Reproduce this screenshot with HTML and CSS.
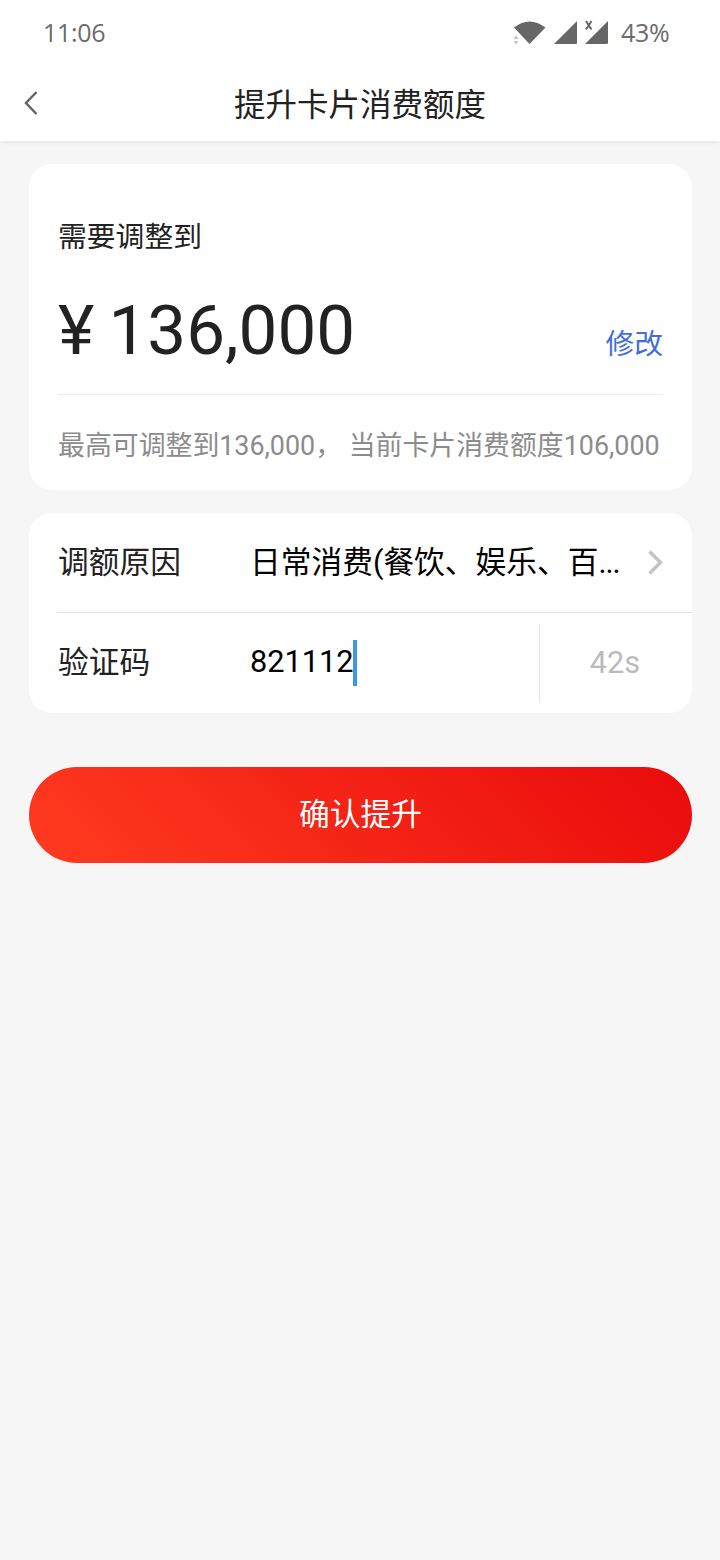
FILE: index.html
```html
<!DOCTYPE html>
<html lang="zh-CN">
<head>
<meta charset="utf-8">
<title>提升卡片消费额度</title>
<link rel="stylesheet" href="styles.css">
</head>
<body>
<header class="header">
  <div class="status">
    <span class="clock">11:06</span>
    <svg class="status-icons" width="100" height="30" viewBox="0 0 100 30">
      <path class="ink" d="M4 9.500Q19.500-2.500 35.500 9.500L19.500 26Z"/>
      <path class="faint" d="M3.500 21L6 17.500L8.500 21ZM3.500 23L6 26.500L8.500 23Z"/>
      <path class="ink" d="M44 26L67 3V25Q67 26 66 26ZM75 26L98 3V25Q98 26 97 26Z"/>
      <path class="cross" d="M76 3L81.500 11.500M81.500 3L76 11.500"/>
    </svg>
    <span class="battery">43%</span>
  </div>
  <div class="nav">
    <svg class="back" width="16" height="26" viewBox="0 0 16 26"><path d="M13.500 1L3 12L13.500 23"/></svg>
    <h1 class="title">提升卡片消费额度</h1>
  </div>
</header>
<main class="content">
  <section class="card limit">
    <div class="limit-label">需要调整到</div>
    <div class="limit-row">
      <span class="amount">¥ 136,000</span>
      <a class="edit">修改</a>
    </div>
    <p class="hint">最高可调整到136,000， 当前卡片消费额度106,000</p>
  </section>
  <section class="card form">
    <div class="row reason">
      <span class="name">调额原因</span>
      <span class="value">日常消费(餐饮、娱乐、百<span class="dots">...</span></span>
      <svg class="chevron" width="18" height="26" viewBox="0 0 18 26"><path d="M2.500 1.500L13.500 12.500L2.500 23.500"/></svg>
    </div>
    <div class="row code">
      <span class="name">验证码</span>
      <span class="value">821112</span><span class="caret"></span>
      <span class="timer">42s</span>
    </div>
  </section>
  <button class="submit">确认提升</button>
</main>
</body>
</html>
```

FILE: styles.css
```css
* { box-sizing: border-box; }
body {
  margin: 0;
  min-height: 1560px;
  background: #f6f6f6;
  color: #222;
  font-family: Roboto, "Noto Sans CJK SC", sans-serif;
}
.header {
  height: 141px;
  background: #fff;
  box-shadow: 0 1px 4px rgba(0, 0, 0, .09);
}
.status {
  display: flex;
  align-items: center;
  height: 66px;
  padding: 0 50px 0 43px;
  color: #6c6c6c;
  font: 400 25px/30px "Open Sans", "Noto Sans", sans-serif;
}
.clock, .battery { padding-bottom: 2px; letter-spacing: -.3px; }
.status-icons { margin-left: auto; margin-right: 11px; }
.ink { fill: #666; }
.faint { fill: #c4c4c4; }
.cross { fill: none; stroke: #666; stroke-width: 2; }
.battery { width: 49px; white-space: nowrap; }
.nav {
  display: grid;
  grid-template-columns: 40px 1fr 40px;
  align-items: center;
  height: 75px;
}
.back { margin-left: 23px; fill: none; stroke: #666; stroke-width: 2.500; }
.title { margin: 0; padding-top: 4px; text-align: center; font-size: 31.500px; line-height: 46px; font-weight: 400; }
.content { padding: 23px 28px 0 29px; }
.card { background: #fff; border-radius: 23px; }
.limit { height: 326px; padding: 52px 29px 0; }
.limit-label { font-size: 28.800px; line-height: 42px; }
.limit-row {
  display: flex;
  justify-content: space-between;
  height: 137px;
  border-bottom: 1px solid #eee;
}
.amount { padding-top: 32px; font-size: 69.120px; line-height: 81px; word-spacing: -3px; }
.edit { padding-top: 65px; font-size: 28.800px; line-height: 42px; color: #426fd8; }
.hint { margin: 31px 0 0; font-size: 26.880px; line-height: 40px; color: #8c8c8c; white-space: nowrap; }
.form { height: 200px; margin-top: 23px; padding-left: 28px; font-size: 30.720px; line-height: 44px; }
.row { display: flex; align-items: center; height: 100px; }
.reason { border-bottom: 1px solid #e2e2e2; }
.name { width: 193px; padding-left: 1px; }
.value { color: #000; white-space: nowrap; }
.code .name { padding-bottom: 1px; }
.code .value { width: 103px; padding-bottom: 2px; }
.dots { letter-spacing: -1px; }
.chevron { margin-left: auto; margin-right: 27px; fill: none; stroke: #c4c4c4; stroke-width: 3.500; }
.caret { width: 4px; height: 46px; background: #3d97df; }
.timer {
  width: 153px;
  height: 78px;
  padding-right: 2px;
  margin-left: auto;
  border-left: 1px solid #e5e5e5;
  color: #bbb;
  line-height: 77px;
  text-align: center;
}
.submit {
  display: block;
  width: 100%;
  height: 96px;
  margin-top: 54px;
  border: 0;
  border-radius: 48px;
  background: linear-gradient(45deg, #ff3b20, #e90b0b);
  color: #fff;
  font: 30.720px/44px Roboto, "Noto Sans CJK SC", sans-serif;
}
```
